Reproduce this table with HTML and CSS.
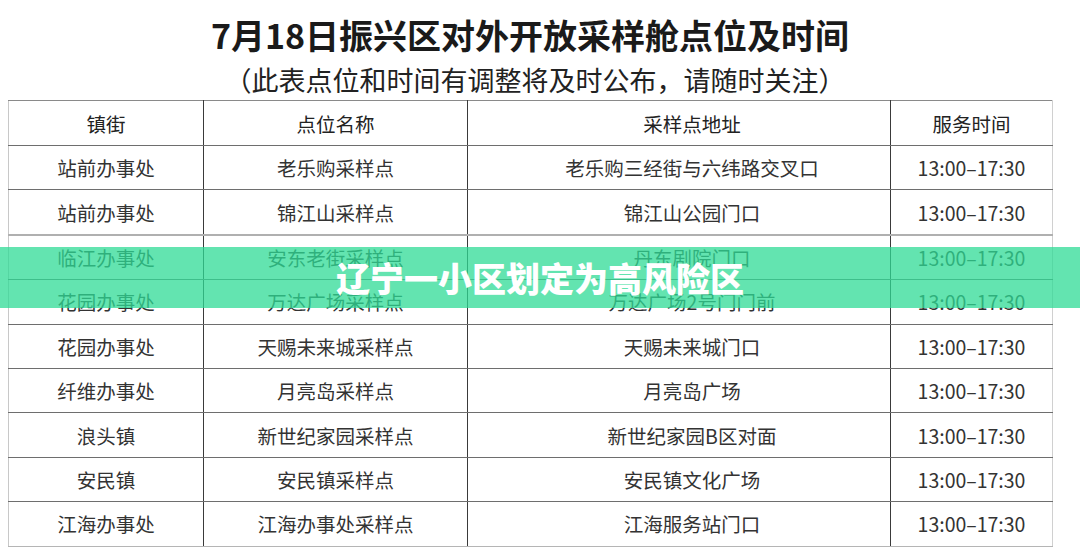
FILE: index.html
```html
<!DOCTYPE html>
<html lang="zh-CN">
<head>
<meta charset="utf-8">
<title>7月18日振兴区对外开放采样舱点位及时间</title>
<link rel="stylesheet" href="styles.css">
</head>
<body>
<div class="page">
  <h1 class="title">7月18日振兴区对外开放采样舱点位及时间</h1>
  <p class="subtitle">（此表点位和时间有调整将及时公布，请随时关注）</p>
  <table class="sites">
    <colgroup>
      <col class="c-town"><col class="c-name"><col class="c-addr"><col class="c-time">
    </colgroup>
    <thead>
      <tr><th>镇街</th><th>点位名称</th><th class="addr">采样点地址</th><th>服务时间</th></tr>
    </thead>
    <tbody>
      <tr><td>站前办事处</td><td>老乐购采样点</td><td class="addr">老乐购三经街与六纬路交叉口</td><td>13:00–17:30</td></tr>
      <tr><td>站前办事处</td><td>锦江山采样点</td><td class="addr">锦江山公园门口</td><td>13:00–17:30</td></tr>
      <tr class="sep"><td>临江办事处</td><td>安东老街采样点</td><td class="addr">丹东剧院门口</td><td>13:00–17:30</td></tr>
      <tr><td>花园办事处</td><td>万达广场采样点</td><td class="addr">万达广场2号门门前</td><td>13:00–17:30</td></tr>
      <tr><td>花园办事处</td><td>天赐未来城采样点</td><td class="addr">天赐未来城门口</td><td>13:00–17:30</td></tr>
      <tr><td>纤维办事处</td><td>月亮岛采样点</td><td class="addr">月亮岛广场</td><td>13:00–17:30</td></tr>
      <tr><td>浪头镇</td><td>新世纪家园采样点</td><td class="addr">新世纪家园B区对面</td><td>13:00–17:30</td></tr>
      <tr><td>安民镇</td><td>安民镇采样点</td><td class="addr">安民镇文化广场</td><td>13:00–17:30</td></tr>
      <tr><td>江海办事处</td><td>江海办事处采样点</td><td class="addr">江海服务站门口</td><td>13:00–17:30</td></tr>
    </tbody>
  </table>
</div>
<div class="banner">辽宁一小区划定为高风险区</div>
</body>
</html>
```

FILE: styles.css
```css
html, body {
  margin: 0;
  padding: 0;
  background: #ffffff;
}
body {
  width: 1080px;
  height: 556px;
  overflow: hidden;
  position: relative;
  font-family: "Noto Sans CJK SC", "Noto Sans", sans-serif;
  color: #2a2a2a;
}
.page {
  padding: 14px 28px 0 8px;
}
.title {
  margin: 0;
  font-size: 34px;
  line-height: 42px;
  font-weight: 700;
  text-align: center;
  color: #1a1a1a;
}
.subtitle {
  margin: 4px 0 0;
  padding-left: 10px;
  font-size: 27px;
  line-height: 40px;
  font-weight: 400;
  text-align: center;
  color: #222;
}
.sites {
  width: 1044px;
  border-collapse: collapse;
  table-layout: fixed;
  font-size: 19.5px;
  color: #333;
}
.c-town { width: 195px; }
.c-name { width: 264px; }
.c-addr { width: 423px; }
.c-time { width: 162px; }
.sites th, .sites td {
  text-align: center;
  vertical-align: middle;
  padding: 0;
  border-top: 1px solid #6e6e6e;
  border-bottom: 1px solid #6e6e6e;
  border-left: 1px solid #3a3a3a;
  border-right: 1px solid #3a3a3a;
}
.sites .addr {
  padding-left: 26px;
}
.sites th {
  height: 44px;
  font-weight: 400;
  color: #222;
  border-top-color: #8a8a8a;
}
.sites td {
  height: 43.4px;
}
.sites tr > :first-child { border-left-color: #c8c8c8; }
.sites tr > :last-child { border-right-color: #d0d0d0; }
.sites tbody tr:last-child td { border-bottom-color: #b5b5b5; }
.sites tr.sep td { border-top: 2px solid #b0b0b0; }
.banner {
  position: absolute;
  left: 0;
  right: 0;
  top: 247px;
  height: 61px;
  background: rgba(47, 219, 149, 0.75);
  color: #ffffff;
  font-size: 34px;
  font-weight: 900;
  line-height: 61px;
  text-align: center;
}
```
